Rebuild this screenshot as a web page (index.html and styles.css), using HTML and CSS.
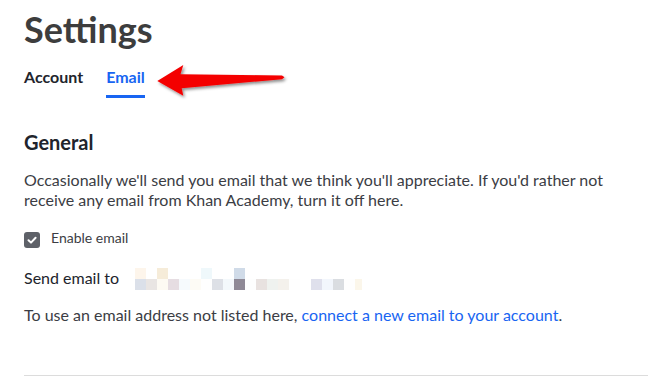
FILE: index.html
```html
<!DOCTYPE html>
<html lang="en">
<head>
<meta charset="utf-8">
<title>Settings</title>
<link rel="stylesheet" href="styles.css">
</head>
<body>
<div class="page">
  <h1 class="title">Settings</h1>
  <nav class="tabs">
    <span class="tab">Account</span>
    <span class="tab active">Email</span>
  </nav>
  <section class="general">
    <h2 class="heading">General</h2>
    <p class="desc">Occasionally we'll send you email that we think you'll appreciate. If you'd rather not receive any email from Khan Academy, turn it off here.</p>
    <label class="check-row">
      <span class="checkbox">
        <svg width="16" height="16" viewBox="0 0 16 16"><path d="M4.5 8.2 L7 10.6 L11.6 5.8" fill="none" stroke="#fff" stroke-width="2" stroke-linecap="round" stroke-linejoin="round"/></svg>
      </span>
      <span class="check-label">Enable email</span>
    </label>
    <div class="send-row">
      <span class="send-label">Send email to</span>
      <div class="blur">
        <i class="b c1"></i><i class="b"></i><i class="b c2"></i><i class="b"></i><i class="b"></i><i class="b"></i><i class="b c3"></i><i class="b"></i><i class="b"></i><i class="b c4"></i><i class="b"></i><i class="b"></i><i class="b"></i><i class="b"></i><i class="b"></i><i class="b"></i><i class="b"></i><i class="b"></i><i class="b"></i><i class="b"></i><i class="b"></i>
        <i class="b d1"></i><i class="b d2"></i><i class="b d3"></i><i class="b d4"></i><i class="b d5"></i><i class="b d6"></i><i class="b d7"></i><i class="b d8"></i><i class="b d9"></i><i class="b d10"></i><i class="b d11"></i><i class="b d12"></i><i class="b d13"></i><i class="b d14"></i><i class="b d7"></i><i class="b"></i><i class="b d15"></i><i class="b d16"></i><i class="b d17"></i><i class="b d7"></i><i class="b d18"></i>
      </div>
    </div>
    <p class="note">To use an email address not listed here, <a class="link" href="#">connect a new email to your account</a>.</p>
  </section>
  <hr class="divider">
</div>
<svg class="arrow" width="300" height="110" viewBox="0 0 300 110">
  <defs>
    <filter id="sh" x="-20%" y="-50%" width="140%" height="200%">
      <feDropShadow dx="1.5" dy="2" stdDeviation="1.5" flood-color="#000" flood-opacity="0.45"/>
    </filter>
  </defs>
  <polygon filter="url(#sh)" fill="#f40606" points="157.3,81 183.3,65 180.5,74.2 282,75.6 284.5,77.3 282,79.2 181.7,88.3 183.3,95.8"/>
</svg>
</body>
</html>
```
FILE: styles.css
```css
* { box-sizing: border-box; }
html, body { margin: 0; padding: 0; background: #fff; }
body {
  font-family: Lato, "Open Sans", "Liberation Sans", sans-serif;
  color: #21242c;
  width: 657px;
  height: 380px;
  overflow: hidden;
  position: relative;
}
.page {
  padding: 7px 9px 0 24px;
}
.title {
  margin: 0;
  font-size: 36px;
  line-height: 44px;
  font-weight: 700;
  color: #3d3d3d;
}
.tabs {
  display: flex;
  gap: 23px;
  margin-top: 16px;
}
.tab {
  font-size: 16px;
  line-height: 20px;
  font-weight: 700;
  color: #21242c;
  padding-bottom: 8px;
  border-bottom: 3px solid transparent;
}
.tab.active {
  color: #1865f2;
  border-bottom-color: #1865f2;
}
.general { margin-top: 32px; }
.heading {
  margin: 0;
  font-size: 20px;
  line-height: 24px;
  font-weight: 700;
  color: #21242c;
}
.desc {
  margin: 16px 0 0;
  font-size: 16px;
  line-height: 20px;
  color: #3b3d44;
  width: 600px;
}
.check-row {
  display: flex;
  align-items: flex-start;
  gap: 11px;
  margin-top: 22px;
}
.checkbox {
  width: 16px;
  height: 16px;
  border-radius: 3px;
  background: #5e6168;
  display: block;
}
.checkbox svg { display: block; }
.check-label {
  font-size: 14px;
  line-height: 16px;
  margin-top: -2px;
  color: #3b3d44;
}
.send-row {
  display: flex;
  align-items: flex-start;
  gap: 16px;
  margin-top: 20px;
}
.send-label {
  font-size: 16px;
  line-height: 20px;
  color: #21242c;
}
.blur {
  display: grid;
  grid-template-columns: repeat(20, 11px) 7px;
  grid-auto-rows: 11px;
}
.b { display: block; background: #fff; }
.c1 { background: #fdf5eb; }
.c2 { background: #f6ecd9; }
.c3 { background: #eff8fb; }
.c4 { background: #d0dbe8; }
.d1 { background: #dbe0e9; }
.d2 { background: #e9e5e3; }
.d3 { background: #fdfaf3; }
.d4 { background: #e6dde2; }
.d5 { background: #f6fafd; }
.d6 { background: #fdfbf5; }
.d7 { background: #fefefe; }
.d8 { background: #dde0e6; }
.d9 { background: #f3f8fb; }
.d10 { background: #8e8996; }
.d11 { background: #fdfefe; }
.d12 { background: #e8e2e0; }
.d13 { background: #eff2ef; }
.d14 { background: #f4f1ec; }
.d15 { background: #dfe0ec; }
.d16 { background: #f2f6fc; }
.d17 { background: #dadde1; }
.d18 { background: #fbf6ea; }
.note {
  margin: 15px 0 0;
  font-size: 16px;
  line-height: 20px;
  color: #3b3d44;
}
.link { color: #1865f2; text-decoration: none; }
.divider {
  margin: 50px 0 0;
  border: 0;
  border-top: 1px solid #dcdcdc;
  height: 0;
}
.arrow {
  position: absolute;
  left: 0;
  top: 0;
}
```
